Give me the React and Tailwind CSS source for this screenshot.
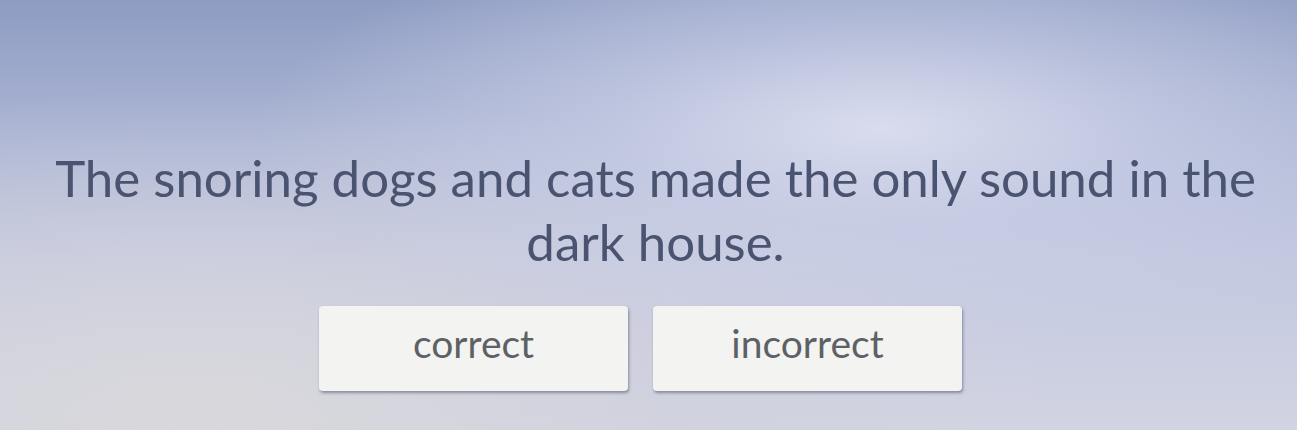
export default function App() {
  const answers = ["correct", "incorrect"];

  return (
    <div
      className="relative h-[430px] w-[1297px] overflow-hidden bg-[radial-gradient(ellipse_at_68%_30%,#d9dcee_0%,rgba(205,210,232,0.6)_22%,rgba(180,186,215,0)_50%),radial-gradient(ellipse_at_15%_95%,#d8d8dc_0%,rgba(210,210,220,0.5)_30%,rgba(200,200,220,0)_55%),linear-gradient(180deg,#8e9cc3_0%,#a9b3d2_30%,#c3c8e0_60%,#d2d4e2_100%)] font-['Lato','Noto_Sans',sans-serif]"
    >
      <div className="flex flex-col items-center pt-[146px]">
        <p className="pl-[14px] text-center text-[51px] leading-[64px] text-[#4a5471]">
          <span className="whitespace-nowrap">The snoring dogs and cats made the only sound in the</span>
          <br />
          dark house.
        </p>
        <div className="mt-[32px] flex gap-[25px] pr-[16px]">
          {answers.map((a) => (
            <button
              key={a}
              type="button"
              className="flex h-[85px] w-[309px] items-start justify-center rounded-[4px] bg-[#f3f4f2] pt-[18px] text-[39px] leading-none text-[#5d6165] shadow-[1px_2px_3px_rgba(60,70,90,0.5)]"
            >
              {a}
            </button>
          ))}
        </div>
      </div>
    </div>
  );
}
